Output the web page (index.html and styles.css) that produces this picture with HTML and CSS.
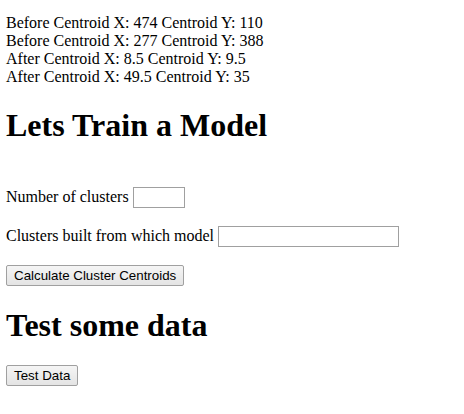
FILE: index.html
```html
<!DOCTYPE html>
<html>
<head>
<meta charset="utf-8">
<link rel="stylesheet" href="styles.css">
</head>
<body>
<div class="results">
<div>Before Centroid X: 474 Centroid Y: 110</div>
<div>Before Centroid X: 277 Centroid Y: 388</div>
<div>After Centroid X: 8.5 Centroid Y: 9.5</div>
<div>After Centroid X: 49.5 Centroid Y: 35</div>
</div>
<h1 class="title">Lets Train a Model</h1>
<form class="train">
<p class="row"><label>Number of clusters <input class="field small" type="text"></label></p>
<p class="row"><label>Clusters built from which model <input class="field wide" type="text"></label></p>
<p class="row"><button class="btn" type="button">Calculate Cluster Centroids</button></p>
</form>
<h1 class="title">Test some data</h1>
<p class="row"><button class="btn" type="button">Test Data</button></p>
</body>
</html>
```
FILE: styles.css
```css
body {
  margin: 14px 6px 8px 6px;
  font-family: "Liberation Serif", "Times New Roman", serif;
  font-size: 16px;
  color: #000;
  background: #fff;
}
.results div {
  line-height: 18px;
}
.title {
  font-size: 32px;
  font-weight: bold;
  margin: 21px 0;
}
.train {
  padding-top: 4px;
}
.row {
  margin: 18px 0;
}
.field {
  font-family: "Liberation Sans", Arial, sans-serif;
  font-size: 13.33px;
  height: 21px;
  box-sizing: border-box;
  border: 1px solid #a0a0a0;
  padding: 1px 2px;
}
.small { width: 52px; }
.wide { width: 181px; }
.btn {
  font-family: "Liberation Sans", Arial, sans-serif;
  font-size: 13.33px;
  height: 21px;
  padding: 1px 7px;
  border: 1px solid #a0a0a0;
  border-radius: 2px;
  background: linear-gradient(#f5f5f5, #e4e4e4);
  color: #000;
}
```
